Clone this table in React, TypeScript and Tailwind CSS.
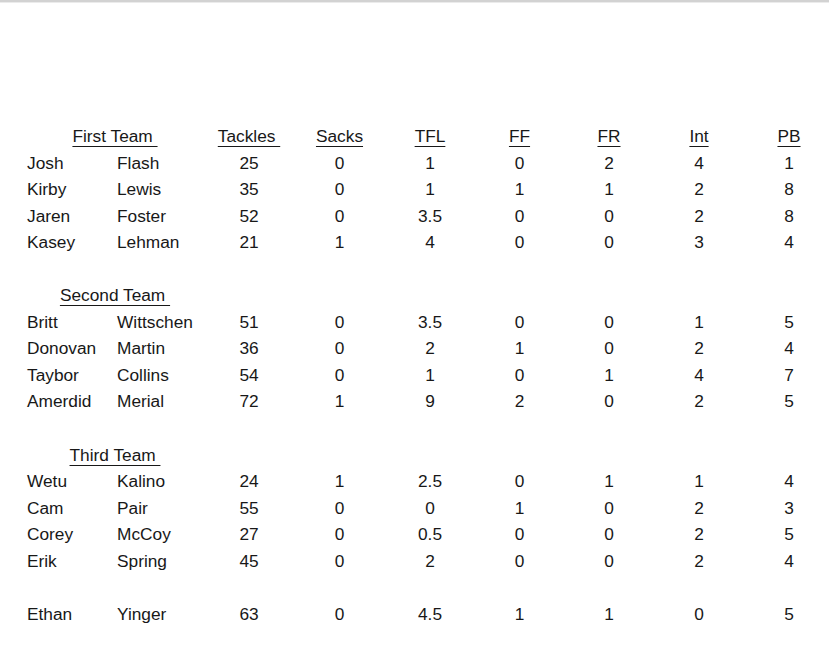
import type { ReactNode } from 'react'

type Player = {
  first: string
  last: string
  stats: string[]
}

const columns = ['Tackles', 'Sacks', 'TFL', 'FF', 'FR', 'Int', 'PB']

const firstTeam: Player[] = [
  { first: 'Josh', last: 'Flash', stats: ['25', '0', '1', '0', '2', '4', '1'] },
  { first: 'Kirby', last: 'Lewis', stats: ['35', '0', '1', '1', '1', '2', '8'] },
  { first: 'Jaren', last: 'Foster', stats: ['52', '0', '3.5', '0', '0', '2', '8'] },
  { first: 'Kasey', last: 'Lehman', stats: ['21', '1', '4', '0', '0', '3', '4'] },
]

const secondTeam: Player[] = [
  { first: 'Britt', last: 'Wittschen', stats: ['51', '0', '3.5', '0', '0', '1', '5'] },
  { first: 'Donovan', last: 'Martin', stats: ['36', '0', '2', '1', '0', '2', '4'] },
  { first: 'Taybor', last: 'Collins', stats: ['54', '0', '1', '0', '1', '4', '7'] },
  { first: 'Amerdid', last: 'Merial', stats: ['72', '1', '9', '2', '0', '2', '5'] },
]

const thirdTeam: Player[] = [
  { first: 'Wetu', last: 'Kalino', stats: ['24', '1', '2.5', '0', '1', '1', '4'] },
  { first: 'Cam', last: 'Pair', stats: ['55', '0', '0', '1', '0', '2', '3'] },
  { first: 'Corey', last: 'McCoy', stats: ['27', '0', '0.5', '0', '0', '2', '5'] },
  { first: 'Erik', last: 'Spring', stats: ['45', '0', '2', '0', '0', '2', '4'] },
]

const extra: Player = { first: 'Ethan', last: 'Yinger', stats: ['63', '0', '4.5', '1', '1', '0', '5'] }

function Row({ children }: { children?: ReactNode }) {
  return (
    <div className="grid h-[26.56px] grid-cols-[90px_91px_90px_91px_90px_89px_90px_90px_90px] items-center">
      {children}
    </div>
  )
}

function TeamHeading({ label, withColumns }: { label: string; withColumns?: boolean }) {
  return (
    <Row>
      <div className="col-span-2 pl-[3px] text-center">
        <span className="whitespace-pre underline decoration-1 underline-offset-[4px]">{label + ' '}</span>
      </div>
      {withColumns
        ? columns.map((c) => (
            <div key={c} className="text-center">
              <span className="whitespace-pre underline decoration-1 underline-offset-[4px]">
                {c === 'Tackles' ? 'Tackles ' : c}
              </span>
            </div>
          ))
        : null}
    </Row>
  )
}

function PlayerRow({ player }: { player: Player }) {
  return (
    <Row>
      <div className="pl-1">{player.first}</div>
      <div className="pl-1">{player.last}</div>
      {player.stats.map((s, i) => (
        <div key={i} className="text-center">
          {s}
        </div>
      ))}
    </Row>
  )
}

export default function App() {
  return (
    <div className="h-[668px] w-[829px] overflow-hidden bg-white font-['Liberation_Sans',Arial,sans-serif] text-[17.3px] text-[#181818]">
      <div className="h-[2px] bg-[#d2d2d2]" />
      <div className="h-px bg-[#ebebeb]" />
      <div className="ml-[23px] pt-[120.7px]">
        <TeamHeading label="First Team" withColumns />
        {firstTeam.map((p) => (
          <PlayerRow key={p.first} player={p} />
        ))}
        <Row />
        <TeamHeading label="Second Team" />
        {secondTeam.map((p) => (
          <PlayerRow key={p.first} player={p} />
        ))}
        <Row />
        <TeamHeading label="Third Team" />
        {thirdTeam.map((p) => (
          <PlayerRow key={p.first} player={p} />
        ))}
        <Row />
        <PlayerRow player={extra} />
      </div>
    </div>
  )
}
